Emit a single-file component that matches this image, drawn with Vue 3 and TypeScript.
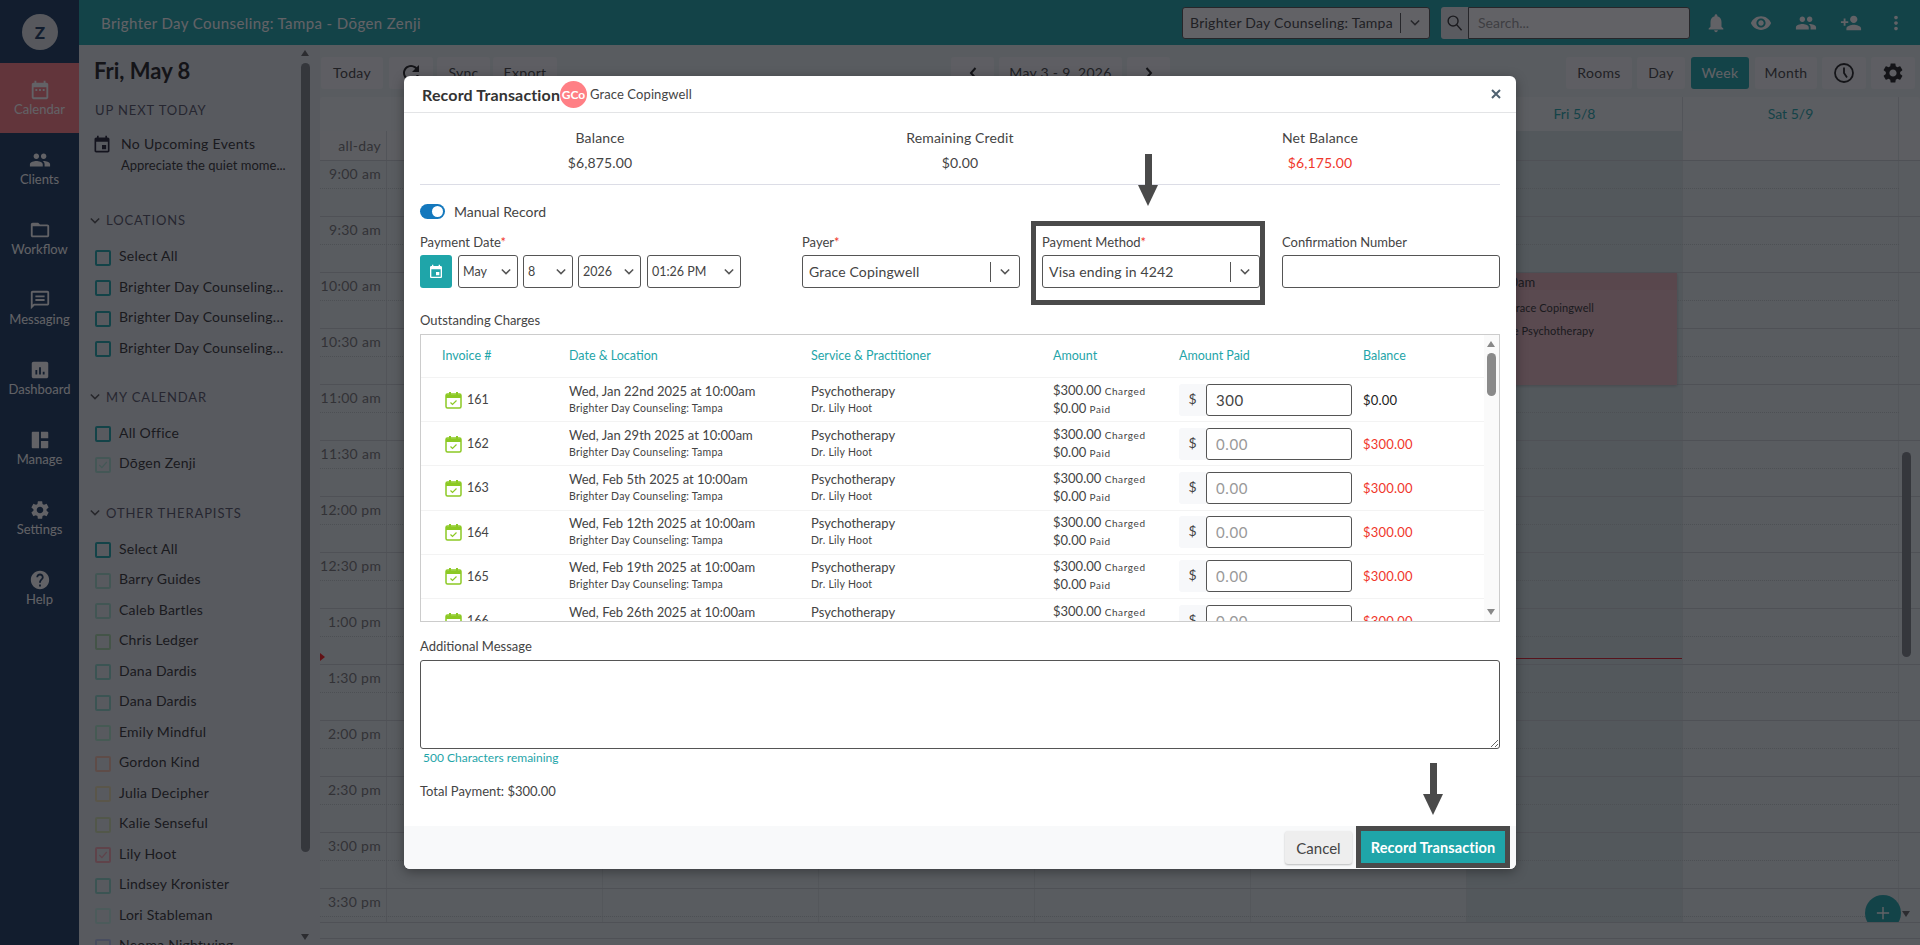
<template>
  <div class="page">
    <div class="app">
      <nav class="sidebar">
        <div class="logo"><span class="logo-circle">Z</span></div>
        <a v-for="item in navItems" :key="item.label" class="nav-item" :class="{ active: item.active }">
          <svg class="nav-icon" viewBox="0 0 24 24"><path :d="item.icon" /></svg>
          <span>{{ item.label }}</span>
        </a>
      </nav>

      <div class="main">
        <header class="topbar">
          <div class="topbar-title">Brighter Day Counseling: Tampa - Dōgen Zenji</div>
          <div class="topbar-select">
            <span>Brighter Day Counseling: Tampa</span>
            <i class="select-sep"></i>
            <svg class="chev" viewBox="0 0 12 8"><path d="M1 1.5l5 5 5-5" /></svg>
          </div>
          <div class="search">
            <span class="search-btn">
              <svg viewBox="0 0 24 24"><circle cx="10" cy="10" r="7" /><path d="M15 15l7 8" /></svg>
            </span>
            <span class="search-input">Search...</span>
          </div>
          <div class="top-icons">
            <svg v-for="d in topIcons" :key="d" viewBox="0 0 24 24"><path :d="d" /></svg>
          </div>
        </header>

        <div class="content">
          <aside class="panel">
            <h2 class="panel-date">Fri, May 8</h2>
            <div class="panel-caption">UP NEXT TODAY</div>
            <div class="upnext">
              <svg viewBox="0 0 24 24"><path :d="icons.event" /></svg>
              <div>
                <div class="upnext-title">No Upcoming Events</div>
                <div class="upnext-sub">Appreciate the quiet mome...</div>
              </div>
            </div>
            <section v-for="group in groups" :key="group.title" class="group">
              <div class="group-title">
                <svg class="chev" viewBox="0 0 12 8"><path d="M1 1.5l5 5 5-5" /></svg>
                {{ group.title }}
              </div>
              <ul class="group-list">
                <li v-for="(row, i) in group.rows" :key="i" class="check-row">
                  <span class="check" :style="{ borderColor: row.color }">
                    <svg v-if="row.checked" viewBox="0 0 16 16"><path d="M3 8l3.5 3.5L13 4" :stroke="row.color" /></svg>
                  </span>
                  <span class="check-label">{{ row.name }}</span>
                </li>
              </ul>
            </section>
            <div class="panel-scroll">
              <i class="arrow-up"></i>
              <i class="panel-thumb"></i>
              <i class="arrow-down"></i>
            </div>
          </aside>

          <div class="calendar">
            <div class="toolbar">
              <button class="tool w-today">Today</button>
              <button class="tool tool-icon">
                <svg viewBox="0 0 24 24"><path :d="icons.refresh" /></svg>
              </button>
              <button class="tool w-sync">Sync</button>
              <button class="tool w-export">Export</button>
              <div class="tool-center">
                <button class="tool tool-nav">
                  <svg viewBox="0 0 8 12"><path d="M6.5 1L2 6l4.5 5" /></svg>
                </button>
                <button class="tool">May 3 - 9, 2026</button>
                <button class="tool tool-nav">
                  <svg viewBox="0 0 8 12"><path d="M1.5 1L6 6l-4.5 5" /></svg>
                </button>
              </div>
              <div class="tool-right">
                <button class="tool w-rooms">Rooms</button>
                <button class="tool w-day">Day</button>
                <button class="tool tool-on w-week">Week</button>
                <button class="tool w-month">Month</button>
                <button class="tool tool-icon">
                  <svg viewBox="0 0 24 24" class="clock"><circle cx="12" cy="12" r="9" /><path d="M12 6.5V12l3 4.5" /></svg>
                </button>
                <button class="tool tool-icon">
                  <svg viewBox="0 0 24 24"><path :d="icons.settings" /></svg>
                </button>
              </div>
            </div>

            <div class="cal-head">
              <div class="cal-corner"></div>
              <div v-for="d in dayHeads" :key="d" class="cal-day">{{ d }}</div>
            </div>
            <div class="cal-allday">
              <div class="slot-time allday-label">all-day</div>
              <div v-for="n in 7" :key="n" class="slot-cell" :class="{ today: n === 6 }"></div>
            </div>
            <div class="cal-grid">
              <div v-for="t in slotTimes" :key="t" class="slot">
                <div class="slot-time">{{ t }}</div>
                <div v-for="n in 7" :key="n" class="slot-cell" :class="{ today: n === 6 }"></div>
              </div>
              <div class="event">
                <div class="event-head">10:00am</div>
                <div class="event-line">Grace Copingwell</div>
                <div class="event-line">Office Psychotherapy</div>
              </div>
              <i class="now-line"></i>
              <i class="now-mark"></i>
              <div class="cal-scroll">
                <i class="cal-thumb"></i>
                <i class="arrow-down"></i>
              </div>
              <span class="fab">
                <svg viewBox="0 0 16 16"><path d="M8 1v14M1 8h14" /></svg>
              </span>
            </div>
            <div class="cal-foot"></div>
          </div>
        </div>
      </div>
    </div>

    <div class="backdrop"></div>

    <div class="modal">
      <div class="modal-head">
        <span class="modal-title">Record Transaction</span>
        <span class="avatar">GCo</span>
        <span class="modal-client">Grace Copingwell</span>
        <svg class="modal-close" viewBox="0 0 12 12"><path d="M2 2l8 8M10 2l-8 8" /></svg>
      </div>

      <div class="modal-body">
        <div class="stats">
          <div v-for="s in stats" :key="s.label" class="stat">
            <div>{{ s.label }}</div>
            <div class="stat-value" :class="{ red: s.red }">{{ s.value }}</div>
          </div>
        </div>

        <div class="manual">
          <span class="toggle"><i></i></span>
          <span>Manual Record</span>
        </div>

        <div class="fields">
          <div>
            <label class="field-label">Payment Date<b>*</b></label>
            <div class="date-group">
              <button class="cal-btn">
                <svg viewBox="0 0 24 24"><path :d="icons.event" /></svg>
              </button>
              <div v-for="p in dateParts" :key="p.text" class="select small" :style="{ width: p.width + 'px' }">
                <span>{{ p.text }}</span>
                <svg class="chev" viewBox="0 0 12 8"><path d="M1 1.5l5 5 5-5" /></svg>
              </div>
            </div>
          </div>
          <div>
            <label class="field-label">Payer<b>*</b></label>
            <div class="select">
              <span>Grace Copingwell</span>
              <i class="select-sep"></i>
              <svg class="chev" viewBox="0 0 12 8"><path d="M1 1.5l5 5 5-5" /></svg>
            </div>
          </div>
          <div>
            <label class="field-label">Payment Method<b>*</b></label>
            <div class="select">
              <span>Visa ending in 4242</span>
              <i class="select-sep"></i>
              <svg class="chev" viewBox="0 0 12 8"><path d="M1 1.5l5 5 5-5" /></svg>
            </div>
          </div>
          <div>
            <label class="field-label">Confirmation Number</label>
            <input class="text-input" type="text" />
          </div>
        </div>

        <div class="field-label charges-label">Outstanding Charges</div>
        <div class="charges">
          <div class="charges-scroll">
            <div class="charge-row charge-head">
              <span>Invoice #</span>
              <span>Date &amp; Location</span>
              <span>Service &amp; Practitioner</span>
              <span>Amount</span>
              <span>Amount Paid</span>
              <span>Balance</span>
            </div>
            <div v-for="c in charges" :key="c.id" class="charge-row">
              <div class="invoice">
                <svg viewBox="0 0 17 18">
                  <rect x="1" y="3" width="15" height="14" rx="1.5" class="inv-box" />
                  <path d="M1 3.5h15V7H1zM4 1h2v3H4zM11 1h2v3h-2z" class="inv-top" />
                  <path d="M5.5 11.5l2 2 4-4" class="inv-check" />
                </svg>
                {{ c.id }}
              </div>
              <div>
                <div class="line">{{ c.date }}</div>
                <div class="line sub">Brighter Day Counseling: Tampa</div>
              </div>
              <div>
                <div class="line">Psychotherapy</div>
                <div class="line sub">Dr. Lily Hoot</div>
              </div>
              <div>
                <div class="line">$300.00 <small>Charged</small></div>
                <div class="line">$0.00 <small>Paid</small></div>
              </div>
              <div class="paid">
                <span class="addon">$</span>
                <input class="paid-input" type="text" :value="c.paid" placeholder="0.00" />
              </div>
              <div class="balance" :class="{ red: !c.paid }">{{ c.paid ? '$0.00' : '$300.00' }}</div>
            </div>
          </div>
          <div class="charges-bar">
            <i class="arrow-up"></i>
            <i class="charges-thumb"></i>
            <i class="arrow-down"></i>
          </div>
        </div>

        <div class="field-label message-label">Additional Message</div>
        <textarea class="message"></textarea>
        <div class="remaining">500 Characters remaining</div>
        <div class="total">Total Payment: $300.00</div>
      </div>

      <div class="modal-foot">
        <button class="btn-cancel">Cancel</button>
        <button class="btn-record">Record Transaction</button>
      </div>
    </div>

    <!-- tutorial callouts painted over the screenshot -->
    <div class="callout callout-method"></div>
    <div class="callout callout-record"></div>
    <div class="pointer pointer-method"></div>
    <div class="pointer pointer-record"></div>
  </div>
</template>

<script setup lang="ts">
type CheckRow = { name: string; color: string; checked?: boolean }

const icons = {
  event: 'M17 12h-5v5h5v-5zM16 1v2H8V1H6v2H5c-1.11 0-1.99.9-1.99 2L3 19c0 1.1.89 2 2 2h14c1.1 0 2-.9 2-2V5c0-1.1-.9-2-2-2h-1V1h-2zm3 18H5V8h14v11z',
  calendar: 'M9 11H7v2h2v-2zm4 0h-2v2h2v-2zm4 0h-2v2h2v-2zm2-7h-1V2h-2v2H8V2H6v2H5c-1.11 0-1.99.9-1.99 2L3 20c0 1.1.89 2 2 2h14c1.1 0 2-.9 2-2V6c0-1.1-.9-2-2-2zm0 16H5V9h14v11z',
  people: 'M16 11c1.66 0 2.99-1.34 2.99-3S17.66 5 16 5c-1.66 0-3 1.34-3 3s1.34 3 3 3zm-8 0c1.66 0 2.99-1.34 2.99-3S9.66 5 8 5C6.34 5 5 6.34 5 8s1.34 3 3 3zm0 2c-2.33 0-7 1.17-7 3.5V19h14v-2.5c0-2.33-4.67-3.5-7-3.5zm8 0c-.29 0-.62.02-.97.05 1.16.84 1.97 1.97 1.97 3.45V19h6v-2.5c0-2.33-4.67-3.5-7-3.5z',
  folder: 'M20 6h-8l-2-2H4c-1.1 0-1.99.9-1.99 2L2 18c0 1.1.9 2 2 2h16c1.1 0 2-.9 2-2V8c0-1.1-.9-2-2-2zm0 12H4V8h16v10z',
  message: 'M20 2H4c-1.1 0-1.99.9-1.99 2L2 22l4-4h14c1.1 0 2-.9 2-2V4c0-1.1-.9-2-2-2zm0 14H5.17L4 17.17V4h16v12zM7 7h10v2H7zm0 4h10v2H7z',
  chart: 'M19 3H5c-1.1 0-2 .9-2 2v14c0 1.1.9 2 2 2h14c1.1 0 2-.9 2-2V5c0-1.1-.9-2-2-2zM9 17H7v-5h2v5zm4 0h-2V9h2v8zm4 0h-2v-3h2v3z',
  manage: 'M3 4a1 1 0 0 1 1-1h7v18H4a1 1 0 0 1-1-1V4zm10-1h7a1 1 0 0 1 1 1v6h-8V3zm0 10h8v7a1 1 0 0 1-1 1h-7v-8z',
  settings: 'M19.14 12.94c.04-.3.06-.61.06-.94 0-.32-.02-.64-.07-.94l2.03-1.58c.18-.14.23-.41.12-.61l-1.92-3.32c-.12-.22-.37-.29-.59-.22l-2.39.96c-.5-.38-1.03-.7-1.62-.94l-.36-2.54c-.04-.24-.24-.41-.48-.41h-3.84c-.24 0-.43.17-.47.41l-.36 2.54c-.59.24-1.13.57-1.62.94l-2.39-.96c-.22-.08-.47 0-.59.22L2.74 8.87c-.12.21-.08.47.12.61l2.03 1.58c-.05.3-.09.63-.09.94s.02.64.07.94l-2.03 1.58c-.18.14-.23.41-.12.61l1.92 3.32c.12.22.37.29.59.22l2.39-.96c.5.38 1.03.7 1.62.94l.36 2.54c.05.24.24.41.48.41h3.84c.24 0 .44-.17.47-.41l.36-2.54c.59-.24 1.13-.56 1.62-.94l2.39.96c.22.08.47 0 .59-.22l1.92-3.32c.12-.22.07-.47-.12-.61l-2.01-1.58zM12 15.6c-1.98 0-3.6-1.62-3.6-3.6s1.62-3.6 3.6-3.6 3.6 1.62 3.6 3.6-1.62 3.6-3.6 3.6z',
  help: 'M12 2C6.48 2 2 6.48 2 12s4.48 10 10 10 10-4.48 10-10S17.52 2 12 2zm1 17h-2v-2h2v2zm2.07-7.75l-.9.92C13.45 12.9 13 13.5 13 15h-2v-.5c0-1.1.45-2.1 1.17-2.83l1.24-1.26c.37-.36.59-.86.59-1.41 0-1.1-.9-2-2-2s-2 .9-2 2H8c0-2.21 1.79-4 4-4s4 1.79 4 4c0 .88-.36 1.68-.93 2.25z',
  bell: 'M12 22c1.1 0 2-.9 2-2h-4c0 1.1.89 2 2 2zm6-6v-5c0-3.07-1.64-5.64-4.5-6.32V4c0-.83-.67-1.5-1.5-1.5s-1.5.67-1.5 1.5v.68C7.63 5.36 6 7.92 6 11v5l-2 2v1h16v-1l-2-2z',
  eye: 'M12 4.5C7 4.5 2.73 7.61 1 12c1.73 4.39 6 7.5 11 7.5s9.27-3.11 11-7.5c-1.73-4.39-6-7.5-11-7.5zM12 17c-2.76 0-5-2.24-5-5s2.24-5 5-5 5 2.24 5 5-2.24 5-5 5zm0-8c-1.66 0-3 1.34-3 3s1.34 3 3 3 3-1.34 3-3-1.34-3-3-3z',
  personAdd: 'M15 12c2.21 0 4-1.79 4-4s-1.79-4-4-4-4 1.79-4 4 1.79 4 4 4zm-9-2V7H4v3H1v2h3v3h2v-3h3v-2H6zm9 4c-2.67 0-8 1.34-8 4v2h16v-2c0-2.66-5.33-4-8-4z',
  dots: 'M12 8c1.1 0 2-.9 2-2s-.9-2-2-2-2 .9-2 2 .9 2 2 2zm0 2c-1.1 0-2 .9-2 2s.9 2 2 2 2-.9 2-2-.9-2-2-2zm0 6c-1.1 0-2 .9-2 2s.9 2 2 2 2-.9 2-2-.9-2-2-2z',
  refresh: 'M17.65 6.35C16.2 4.9 14.21 4 12 4c-4.42 0-7.99 3.58-7.99 8s3.57 8 7.99 8c3.73 0 6.84-2.55 7.73-6h-2.08c-.82 2.33-3.04 4-5.65 4-3.31 0-6-2.69-6-6s2.69-6 6-6c1.66 0 3.14.69 4.22 1.78L13 11h7V4l-2.35 2.35z',
}

const navItems = [
  { label: 'Calendar', icon: icons.calendar, active: true },
  { label: 'Clients', icon: icons.people },
  { label: 'Workflow', icon: icons.folder },
  { label: 'Messaging', icon: icons.message },
  { label: 'Dashboard', icon: icons.chart },
  { label: 'Manage', icon: icons.manage },
  { label: 'Settings', icon: icons.settings },
  { label: 'Help', icon: icons.help },
]

const topIcons = [icons.bell, icons.eye, icons.people, icons.personAdd, icons.dots]

const teal = '#1fa5a9'
const counseling = 'Brighter Day Counseling...'

const groups: { title: string; rows: CheckRow[] }[] = [
  {
    title: 'LOCATIONS',
    rows: [
      { name: 'Select All', color: teal },
      { name: counseling, color: teal },
      { name: counseling, color: teal },
      { name: counseling, color: teal },
    ],
  },
  {
    title: 'MY CALENDAR',
    rows: [
      { name: 'All Office', color: teal },
      { name: 'Dōgen Zenji', color: '#a8e0d0', checked: true },
    ],
  },
  {
    title: 'OTHER THERAPISTS',
    rows: [
      { name: 'Select All', color: teal },
      { name: 'Barry Guides', color: '#a4dccc' },
      { name: 'Caleb Bartles', color: '#a4dccc' },
      { name: 'Chris Ledger', color: '#a8d8a8' },
      { name: 'Dana Dardis', color: '#90d8c8' },
      { name: 'Dana Dardis', color: '#90d8c8' },
      { name: 'Emily Mindful', color: '#b0e8cc' },
      { name: 'Gordon Kind', color: '#f2c0a8' },
      { name: 'Julia Decipher', color: '#e8dcb0' },
      { name: 'Kalie Senseful', color: '#d0e0b0' },
      { name: 'Lily Hoot', color: '#f5a5b0', checked: true },
      { name: 'Lindsey Kronister', color: '#90d8c8' },
      { name: 'Lori Stableman', color: '#c0ecdf' },
      { name: 'Neoma Nightwing', color: '#b4c4ec' },
    ],
  },
]

const dayHeads = ['Sun 5/3', 'Mon 5/4', 'Tue 5/5', 'Wed 5/6', 'Thu 5/7', 'Fri 5/8', 'Sat 5/9']

const slotTimes = [
  '9:00 am', '9:30 am', '10:00 am', '10:30 am', '11:00 am', '11:30 am', '12:00 pm',
  '12:30 pm', '1:00 pm', '1:30 pm', '2:00 pm', '2:30 pm', '3:00 pm', '3:30 pm',
]

const stats = [
  { label: 'Balance', value: '$6,875.00' },
  { label: 'Remaining Credit', value: '$0.00' },
  { label: 'Net Balance', value: '$6,175.00', red: true },
]

const dateParts = [
  { text: 'May', width: 60 },
  { text: '8', width: 50 },
  { text: '2026', width: 63 },
  { text: '01:26 PM', width: 94 },
]

const charges = [
  { id: 161, date: 'Wed, Jan 22nd 2025 at 10:00am', paid: '300' },
  { id: 162, date: 'Wed, Jan 29th 2025 at 10:00am', paid: '' },
  { id: 163, date: 'Wed, Feb 5th 2025 at 10:00am', paid: '' },
  { id: 164, date: 'Wed, Feb 12th 2025 at 10:00am', paid: '' },
  { id: 165, date: 'Wed, Feb 19th 2025 at 10:00am', paid: '' },
  { id: 166, date: 'Wed, Feb 26th 2025 at 10:00am', paid: '' },
]
</script>

<style>
html,
body {
  margin: 0;
  background: #e4eaec;
}
</style>

<style scoped>
* {
  box-sizing: border-box;
}

.page {
  position: relative;
  width: 1920px;
  height: 945px;
  overflow: hidden;
  font-family: Lato, "Liberation Sans", sans-serif;
  font-size: 13px;
  color: #444;
}

.app {
  display: flex;
  height: 100%;
}

.sidebar {
  width: 79px;
  flex: none;
  background: #1a3a5e;
}

.logo {
  height: 63px;
  padding: 14px 0 0 22px;
}

.logo-circle {
  display: flex;
  align-items: center;
  justify-content: center;
  width: 36px;
  height: 36px;
  border-radius: 50%;
  background: #dfe3e6;
  color: #1a3a5e;
  font-size: 17px;
  font-weight: 900;
}

.nav-item {
  display: flex;
  flex-direction: column;
  align-items: center;
  height: 70px;
  padding-top: 16px;
  color: #fff;
  font-size: 13px;
  line-height: 16px;
}

.nav-item.active {
  background: #ff7f85;
}

.nav-icon {
  width: 22px;
  height: 22px;
  fill: #fff;
}

.main {
  flex: 1;
  display: flex;
  flex-direction: column;
  min-width: 0;
}

.topbar {
  height: 45px;
  flex: none;
  display: flex;
  align-items: center;
  background: #1fa5a9;
  padding-left: 22px;
}

.topbar-title {
  color: #fff;
  font-size: 15px;
  letter-spacing: 0.4px;
  width: 1081px;
}

.topbar-select {
  display: flex;
  align-items: center;
  width: 248px;
  height: 32px;
  padding: 0 9px 0 7px;
  background: #fff;
  border: 1px solid #555;
  border-radius: 3px;
  font-size: 14px;
  letter-spacing: 0.25px;
  color: #444;
  white-space: nowrap;
}

.select-sep {
  width: 1px;
  height: 20px;
  background: #555;
  margin-left: auto;
}

.chev {
  width: 10px;
  height: 7px;
  margin-left: 9px;
  flex: none;
  fill: none;
  stroke: #555;
  stroke-width: 1.8;
}

.search {
  display: flex;
  margin-left: 11px;
  height: 32px;
}

.search-btn {
  width: 27px;
  background: #e9ecee;
  border-radius: 3px 0 0 3px;
  display: flex;
  align-items: center;
  justify-content: center;
}

.search-btn svg {
  width: 17px;
  height: 19px;
  fill: none;
  stroke: #333;
  stroke-width: 2;
}

.search-input {
  width: 222px;
  background: #fff;
  border: 1px solid #555;
  border-radius: 0 3px 3px 0;
  padding-left: 9px;
  line-height: 30px;
  color: #999;
  font-size: 14px;
}

.top-icons {
  display: flex;
  gap: 23px;
  margin-left: 15px;
}

.top-icons svg {
  width: 22px;
  height: 22px;
  fill: #fff;
}

.content {
  flex: 1;
  display: flex;
  min-height: 0;
}

.panel {
  position: relative;
  width: 241px;
  flex: none;
  padding: 11px 0 0 15px;
  background: #e2e8ec;
  overflow: hidden;
  font-size: 14px;
  color: #333;
}

.panel-date {
  margin: 0;
  font-size: 22px;
  line-height: 30px;
  font-weight: 700;
  color: #222;
}

.panel-caption,
.group-title {
  font-size: 13px;
  line-height: 16px;
  letter-spacing: 0.9px;
  color: #556;
}

.panel-caption {
  margin: 16px 0 0 1px;
}

.upnext {
  display: flex;
  gap: 9px;
  margin-top: 16px;
}

.upnext svg {
  width: 20px;
  height: 22px;
  margin: 0 0 0 -2px;
  fill: #223;
  flex: none;
}

.upnext-title {
  line-height: 20px;
  letter-spacing: 0.3px;
}

.upnext-sub {
  margin-top: 2px;
  font-size: 13px;
  line-height: 18px;
  white-space: nowrap;
}

.group {
  margin-top: 26px;
}

.upnext + .group {
  margin-top: 38px;
}

.group-title {
  display: flex;
  align-items: center;
  gap: 6px;
  margin-left: -4px;
}

.group-title .chev {
  margin-left: 0;
}

.group-list {
  list-style: none;
  margin: 12.75px 0 0;
  padding: 0;
}

.check-row {
  display: flex;
  gap: 8px;
  height: 30.5px;
  align-items: center;
  line-height: 18px;
  letter-spacing: 0.22px;
}

.check {
  width: 16px;
  height: 16px;
  flex: none;
  border: 2px solid;
  border-radius: 2px;
  margin: 3px 0 0 1px;
}

.check svg {
  display: block;
  width: 12px;
  height: 12px;
  fill: none;
  stroke-width: 1.6;
}

.check-label {
  white-space: nowrap;
}

.panel-scroll {
  position: absolute;
  top: 0;
  bottom: 0;
  left: 222px;
  width: 9px;
}

.arrow-up,
.arrow-down {
  position: absolute;
  left: 0;
  border-left: 4.5px solid transparent;
  border-right: 4.5px solid transparent;
}

.arrow-up {
  top: 5px;
  border-bottom: 6px solid #666;
}

.arrow-down {
  bottom: 5px;
  border-top: 6px solid #666;
}

.panel-thumb {
  position: absolute;
  top: 18px;
  height: 789px;
  width: 9px;
  border-radius: 5px;
  background: #7f8488;
}

.calendar {
  flex: 1;
  min-width: 0;
  display: flex;
  flex-direction: column;
  background: #e6edee;
}

.toolbar {
  display: flex;
  height: 52px;
  padding: 12px 0 8px 1px;
  gap: 4px;
}

.tool {
  height: 32px;
  padding: 0 0 2px;
  border: none;
  border-radius: 3px;
  background: #f2f4f5;
  font-family: inherit;
  font-size: 14px;
  letter-spacing: 0.3px;
  color: #444;
}

.w-today {
  width: 62px;
  margin-right: 2px;
}

.w-sync {
  width: 53px;
  margin-right: -1px;
}

.w-export {
  width: 64px;
}

.w-rooms {
  width: 66px;
}

.w-day {
  width: 48px;
}

.w-week {
  width: 58px;
  margin-left: 1px;
}

.w-month {
  width: 62px;
  margin-left: 1px;
}

.tool-icon {
  width: 44px;
  padding: 0;
  display: flex;
  align-items: center;
  justify-content: center;
}

.tool-icon svg {
  width: 24px;
  height: 24px;
  fill: #222;
}

.clock {
  fill: none !important;
  stroke: #222;
  stroke-width: 1.8;
}

.tool-nav {
  width: 43px;
  padding: 0;
}

.tool-nav svg {
  width: 8px;
  height: 12px;
  fill: none;
  stroke: #222;
  stroke-width: 2;
}

.tool-center {
  display: flex;
  gap: 5px;
  margin-left: 390px;
}

.tool-center .tool:nth-child(2) {
  width: 123px;
}

.tool-right {
  display: flex;
  gap: 5px;
  margin-left: auto;
  margin-right: 5px;
}

.tool-on {
  background: #1fa5a9;
  color: #fff;
}

.cal-head {
  display: grid;
  grid-template-columns: 67px repeat(7, 216px);
  height: 34px;
  background: #eef2f3;
  border-radius: 3px 3px 0 0;
}

.cal-day {
  text-align: center;
  line-height: 33px;
  font-size: 14px;
  color: #1fa5a9;
  border-right: 1px solid #d2d8da;
}

.cal-allday,
.slot {
  display: grid;
  grid-template-columns: 67px repeat(7, 216px);
}

.cal-allday {
  height: 29px;
  background: #f0f4f4;
}

.cal-grid {
  position: relative;
  height: 763px;
  flex: none;
  overflow: hidden;
  border-bottom: 1px solid #c8cfd2;
}

.cal-foot {
  height: 16px;
  flex: none;
  border-bottom: 1px solid #c8cfd2;
}

.slot {
  position: relative;
  height: 56px;
  border-top: 1px solid #c8cfd2;
}

.slot::after {
  content: "";
  position: absolute;
  left: 0;
  top: 27px;
  width: 1579px;
  border-top: 1px dotted #c3cacc;
}

.slot-time {
  padding: 4px 5px 0 0;
  text-align: right;
  line-height: 18px;
  font-size: 14px;
  letter-spacing: 0.3px;
  white-space: nowrap;
  color: #777;
  border-right: 1px solid #d2d8da;
}

.allday-label {
  padding-top: 6px;
}

.slot-cell {
  border-right: 1px solid #d8dee0;
}

.slot-cell.today {
  background: #d3e3e3;
}

.event {
  position: absolute;
  left: 1152px;
  top: 113px;
  width: 205px;
  height: 112px;
  background: #e8babf;
  box-shadow: 0 1px 3px rgba(0, 0, 0, 0.2);
  font-size: 11px;
  letter-spacing: 0.1px;
  color: #333;
}

.event-head {
  height: 17px;
  padding-left: 12px;
  line-height: 18px;
  background: #e4b2b8;
  font-size: 13px;
}

.event-line {
  padding-right: 83px;
  margin-top: 11px;
  line-height: 14px;
  text-align: right;
  white-space: nowrap;
}

.event-line + .event-line {
  margin-top: 9px;
}

.now-line {
  position: absolute;
  left: 1147px;
  top: 498px;
  width: 215px;
  height: 1px;
  background: #e01e2b;
}

.now-mark {
  position: absolute;
  left: 0;
  top: 493px;
  border-left: 5px solid #ff1a1a;
  border-top: 4px solid transparent;
  border-bottom: 4px solid transparent;
}

.cal-scroll {
  position: absolute;
  top: 0;
  right: 9px;
  bottom: 0;
  width: 9px;
}

.cal-thumb {
  position: absolute;
  top: 292px;
  width: 9px;
  height: 205px;
  border-radius: 5px;
  background: #7f8488;
}

.fab {
  position: absolute;
  left: 1545px;
  top: 735px;
  width: 36px;
  height: 36px;
  border-radius: 50%;
  background: #1fa5a9;
  display: flex;
  align-items: center;
  justify-content: center;
}

.fab svg {
  width: 14px;
  height: 14px;
  fill: none;
  stroke: #fff;
  stroke-width: 1.6;
}

.backdrop {
  position: absolute;
  inset: 0;
  background: rgba(14, 14, 20, 0.65);
}

.modal {
  position: absolute;
  left: 404px;
  top: 76px;
  width: 1112px;
  height: 793px;
  display: flex;
  flex-direction: column;
  background: #fff;
  border-radius: 6px;
  box-shadow: 0 3px 12px rgba(0, 0, 0, 0.35);
  overflow: hidden;
}

.modal-head {
  display: flex;
  align-items: center;
  height: 37px;
  flex: none;
  padding: 0 14px 0 18px;
  border-bottom: 1px solid #e3e4e6;
}

.modal-title {
  width: 138px;
  font-size: 16px;
  letter-spacing: 0.15px;
  font-weight: 700;
  color: #333;
  white-space: nowrap;
}

.avatar {
  width: 27px;
  height: 27px;
  border-radius: 50%;
  background: #ff7f85;
  color: #fff;
  text-align: center;
  font-size: 12px;
  font-weight: 700;
  line-height: 27px;
}

.modal-client {
  margin-left: 3px;
  font-size: 13px;
  letter-spacing: 0.1px;
}

.modal-close {
  width: 12px;
  height: 12px;
  margin-left: auto;
  fill: none;
  stroke: #4f6170;
  stroke-width: 2;
}

.modal-body {
  flex: 1;
  padding: 0 16px;
  min-height: 0;
}

.stats {
  display: grid;
  grid-template-columns: repeat(3, 1fr);
  padding: 15px 0 11px;
  border-bottom: 1px solid #dcdde6;
  text-align: center;
  font-size: 14px;
  line-height: 20px;
  letter-spacing: 0.15px;
}

.stat-value {
  margin-top: 5px;
}

.red {
  color: #f0372c;
}

.manual {
  display: flex;
  align-items: center;
  gap: 9px;
  margin-top: 19px;
  height: 15px;
  font-size: 14px;
}

.toggle {
  position: relative;
  width: 25px;
  height: 15px;
  border-radius: 8px;
  background: #1478bd;
}

.toggle i {
  position: absolute;
  right: 2px;
  top: 2px;
  width: 11px;
  height: 11px;
  border-radius: 50%;
  background: #fff;
}

.fields {
  display: grid;
  grid-template-columns: 360px 218px 218px 218px;
  gap: 22px;
  margin-top: 15px;
}

.field-label {
  display: block;
  font-size: 13px;
  line-height: 16px;
  margin-bottom: 5px;
}

.field-label b {
  color: #f0372c;
  font-weight: 400;
}

.date-group {
  display: flex;
  gap: 5px;
}

.cal-btn {
  width: 32px;
  height: 33px;
  margin-right: 1px;
  padding: 0;
  border: none;
  border-radius: 3px;
  background: #1fa5a9;
  display: flex;
  align-items: center;
  justify-content: center;
}

.cal-btn svg {
  width: 16px;
  height: 16px;
  fill: #fff;
}

.select {
  display: flex;
  align-items: center;
  height: 33px;
  padding: 0 9px 0 6px;
  border: 1px solid #555;
  border-radius: 3px;
  font-size: 14px;
  letter-spacing: 0.15px;
  white-space: nowrap;
}

.select.small {
  padding: 0 6px 0 4px;
  font-size: 12.5px;
  letter-spacing: 0;
}

.select.small:nth-child(5) {
  margin-left: 1px;
}

.select.small .chev {
  margin-left: auto;
}

.text-input {
  display: block;
  width: 100%;
  height: 33px;
  border: 1px solid #555;
  border-radius: 3px;
  outline: none;
}

.charges-label {
  margin: 24px 0 6px;
}

.charges {
  display: flex;
  height: 288px;
  border: 1px solid #ccc;
}

.charges-scroll {
  flex: 1;
  min-width: 0;
  overflow: hidden;
}

.charges-bar {
  position: relative;
  width: 15px;
  flex: none;
  background: #fafafa;
}

.charges-bar .arrow-up,
.charges-bar .arrow-down {
  left: 3px;
  border-left-width: 4.5px;
  border-right-width: 4.5px;
  border-top-color: #888;
  border-bottom-color: #888;
}

.charges-bar .arrow-up {
  top: 6px;
}

.charges-bar .arrow-down {
  bottom: 6px;
}

.charges-thumb {
  position: absolute;
  left: 3px;
  top: 18px;
  width: 9px;
  height: 43px;
  border-radius: 5px;
  background: #8a8a8a;
}

.charge-row {
  display: grid;
  grid-template-columns: 127px 242px 242px 126px 184px 1fr;
  align-items: center;
  height: 44.2px;
  padding-left: 21px;
  border-top: 1px solid #f3f3f3;
  font-size: 13px;
}

.charge-head {
  height: 42px;
  padding-bottom: 2px;
  border-top: none;
  color: #1fa5a9;
  font-size: 12.5px;
}

.invoice {
  display: flex;
  align-items: center;
  gap: 5px;
  padding-left: 3px;
  font-size: 12.5px;
}

.invoice svg {
  width: 17px;
  height: 18px;
}

.inv-box {
  fill: #fff;
  stroke: #8cc924;
  stroke-width: 1.5;
}

.inv-top {
  fill: #8cc924;
}

.inv-check {
  fill: none;
  stroke: #8cc924;
  stroke-width: 1.2;
}

.line {
  line-height: 17px;
  white-space: nowrap;
}

.line.sub {
  font-size: 10.5px;
  letter-spacing: 0.25px;
}

.line small {
  font-size: 10px;
  letter-spacing: 0.6px;
}

.paid {
  display: flex;
  height: 32px;
}

.addon {
  width: 27px;
  background: #f7f8fa;
  text-align: center;
  line-height: 30px;
  font-size: 14px;
  border-radius: 3px 0 0 3px;
}

.paid-input {
  width: 146px;
  height: 32px;
  padding: 0 9px;
  border: 1px solid #555;
  border-radius: 3px;
  outline: none;
  font-family: inherit;
  font-size: 15px;
  letter-spacing: 0.6px;
  color: #444;
}

.paid-input::placeholder {
  color: #999;
}

.balance {
  letter-spacing: 0.2px;
}

.balance:not(.red) {
  color: #222;
}

.message-label {
  margin: 16px 0 6px;
}

.message {
  display: block;
  width: 100%;
  height: 89px;
  border: 1px solid #555;
  border-radius: 3px;
  outline: none;
  font-family: inherit;
}

.remaining {
  margin: 2px 0 0 3px;
  font-size: 12px;
  line-height: 14px;
  color: #1fa5a9;
}

.total {
  margin-top: 18px;
  line-height: 16px;
  font-size: 13px;
}

.modal-foot {
  display: flex;
  justify-content: flex-end;
  gap: 9px;
  height: 43px;
  flex: none;
  padding: 5px 11px 0 0;
  background: #f8f9fa;
}

.btn-cancel,
.btn-record {
  height: 33px;
  border: none;
  font-family: inherit;
  font-size: 15px;
}

.btn-cancel {
  width: 67px;
  border-radius: 3px;
  background: #eee;
  color: #444;
  box-shadow: 0 1px 2px rgba(0, 0, 0, 0.25);
}

.btn-record {
  width: 144px;
  height: 32px;
  font-size: 14.5px;
  letter-spacing: 0.1px;
  background: #1fa5a9;
  color: #fff;
  font-weight: 700;
}

.callout {
  position: absolute;
  border: 5px solid #4a4a4a;
}

.callout-method {
  left: 1031px;
  top: 221px;
  width: 234px;
  height: 84px;
}

.callout-record {
  left: 1356px;
  top: 826px;
  width: 154px;
  height: 42px;
}

.pointer {
  position: absolute;
  width: 7px;
  background: #4a4a4a;
}

.pointer::after {
  content: "";
  position: absolute;
  left: -7px;
  bottom: -20px;
  border-left: 10.5px solid transparent;
  border-right: 10.5px solid transparent;
  border-top: 21px solid #4a4a4a;
}

.pointer-method {
  left: 1145px;
  top: 154px;
  height: 32px;
}

.pointer-record {
  left: 1430px;
  top: 763px;
  height: 32px;
}
</style>
